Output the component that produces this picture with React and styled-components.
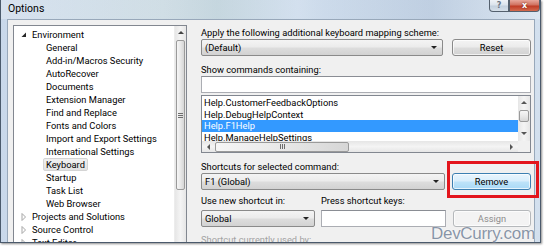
import React from "react";
import styled, { createGlobalStyle } from "styled-components";

const GlobalStyle = createGlobalStyle`
  html, body {
    margin: 0;
    padding: 0;
    background: #ffffff;
  }
  body {
    font-family: Roboto, "Noto Sans", sans-serif;
    font-size: 9.3px;
    color: #000;
  }
`;

const Page = styled.div`
  position: relative;
  width: 544px;
  height: 248px;
  overflow: hidden;
  background: #ffffff;
`;

const Window = styled.div`
  width: 541px;
  height: 243px;
  box-sizing: border-box;
  display: flex;
  flex-direction: column;
  background: linear-gradient(90deg, #c9d8ea 0%, #d6e2ef 30%, #c5d6e9 60%, #d3e0ee 100%);
  border: 1px solid #4b5a6c;
  border-top: none;
  box-shadow: 1px 1px 2px rgba(0, 0, 0, 0.45);
  overflow: hidden;
`;

const TitleBar = styled.div`
  height: 19px;
  flex: none;
  display: flex;
  align-items: flex-start;
  padding-left: 7px;
  background: linear-gradient(90deg, rgba(255,255,255,0.25) 0%, rgba(120,160,120,0.12) 40%, rgba(255,255,255,0.2) 55%, rgba(120,140,170,0.15) 80%, rgba(255,255,255,0.2) 100%);
`;

const Title = styled.span`
  font-size: 10.5px;
  line-height: 18px;
  color: #000;
`;

const CaptionButtons = styled.div`
  margin-left: auto;
  display: flex;
`;

const CaptionButton = styled.div`
  width: ${(p) => p.$w}px;
  height: 12px;
  flex: none;
  box-sizing: border-box;
  display: flex;
  align-items: center;
  justify-content: center;
  border: 1px solid #54606e;
  border-top: none;
  font-family: "DejaVu Sans", sans-serif;
  font-size: 8px;
  font-weight: bold;
  color: ${(p) => (p.$close ? "#ffffff" : "#6c7684")};
  background: ${(p) =>
    p.$close
      ? "linear-gradient(180deg, #e8a89c 0%, #d0715f 45%, #c03c26 55%, #d36a4e 100%)"
      : "linear-gradient(180deg, #eef2f7 0%, #dbe3ec 45%, #c3d0de 55%, #d6e0ea 100%)"};
  border-radius: ${(p) => (p.$close ? "0 0 4px 0" : "0 0 0 4px")};
  text-shadow: ${(p) => (p.$close ? "0 0 2px #5a1a10" : "none")};
`;

const Body = styled.div`
  flex: 1;
  min-height: 0;
  margin: 0 5px 0 6px;
  display: flex;
  gap: 14px;
  padding: 5px 3px 0 5px;
  background: #f0f0f0;
  border: 1px solid #98a8ba;
  border-bottom: none;
`;

const TreePanel = styled.div`
  width: 174px;
  height: 240px;
  flex: none;
  display: flex;
  box-sizing: border-box;
  border: 1px solid #828790;
  border-bottom: none;
  background: #ffffff;
`;

const TreeList = styled.div`
  flex: 1;
  padding-top: 2px;
`;

const TreeRow = styled.div`
  height: 13px;
  display: flex;
  align-items: center;
  padding-left: ${(p) => (p.$child ? 29 : 7)}px;
  white-space: nowrap;
`;

const Expander = styled.span`
  width: 8px;
  flex: none;
  display: flex;
  align-items: center;
`;

const TreeLabel = styled.span`
  padding: 0 2px;
  line-height: 11px;
  border: 1px solid ${(p) => (p.$selected ? "#d4d4d4" : "transparent")};
  border-radius: 2px;
  background: ${(p) => (p.$selected ? "linear-gradient(180deg, #f0f0f0, #e2e2e2)" : "transparent")};
`;

const VScroll = styled.div`
  width: 11px;
  flex: none;
  display: flex;
  flex-direction: column;
  align-items: center;
  background: linear-gradient(90deg, #e6e6e6, #f4f4f4 50%, #e6e6e6);
  border-left: 1px solid #ececec;
`;

const ArrowCell = styled.div`
  height: ${(p) => p.$h || 12}px;
  width: 100%;
  flex: none;
  display: flex;
  align-items: center;
  justify-content: center;
`;

const Thumb = styled.div`
  width: ${(p) => p.$w || 9}px;
  height: ${(p) => p.$h}px;
  flex: none;
  box-sizing: border-box;
  border: 1px solid #9a9a9a;
  border-radius: 2px;
  background: ${(p) =>
    p.$horizontal
      ? "linear-gradient(180deg, #f6f6f6 0%, #e8e8e8 50%, #d6d6d6 100%)"
      : "linear-gradient(90deg, #f6f6f6 0%, #e8e8e8 50%, #d6d6d6 100%)"};
  display: flex;
  align-items: center;
  justify-content: center;
`;

const Grip = styled.div`
  display: flex;
  flex-direction: ${(p) => (p.$horizontal ? "row" : "column")};
  gap: 1px;
  & > span {
    display: block;
    width: ${(p) => (p.$horizontal ? "1px" : "5px")};
    height: ${(p) => (p.$horizontal ? "5px" : "1px")};
    background: #6d6d6d;
  }
`;

const Settings = styled.div`
  flex: 1;
  display: flex;
  flex-direction: column;
  margin-top: 1px;
  & > * {
    flex: none;
  }
`;

const Label = styled.div`
  height: 13px;
  line-height: 13px;
  margin-top: ${(p) => p.$mt || 0}px;
  color: ${(p) => (p.$disabled ? "#a3a3a3" : "#000")};
  white-space: nowrap;
`;

const ControlRow = styled.div`
  display: grid;
  grid-template-columns: 1fr 79px;
  column-gap: ${(p) => p.$gap}px;
  height: 17px;
`;

const Combo = styled.div`
  box-sizing: border-box;
  height: 17px;
  display: flex;
  align-items: center;
  padding: 0 5px 0 3px;
  border: 1px solid #8a8a8a;
  border-radius: 2px;
  background: linear-gradient(180deg, #f4f4f4 0%, #ebebeb 48%, #dddddd 52%, #d2d2d2 100%);
  white-space: nowrap;
`;

const ComboText = styled.span`
  flex: 1;
`;

const Button = styled.div`
  box-sizing: border-box;
  height: 17px;
  display: flex;
  align-items: center;
  justify-content: center;
  border-radius: 3px;
  border: 1px solid ${(p) => (p.$hot ? "#3c7fb1" : p.$disabled ? "#b5b8bb" : "#8a8a8a")};
  color: ${(p) => (p.$disabled ? "#8d8d8d" : "#000")};
  background: ${(p) =>
    p.$hot
      ? "linear-gradient(180deg, #e9f5fd 0%, #d8eefc 48%, #bee3f9 52%, #a9d9f6 100%)"
      : p.$disabled
      ? "#f3f3f3"
      : "linear-gradient(180deg, #f4f4f4 0%, #ebebeb 48%, #dddddd 52%, #d2d2d2 100%)"};
  box-shadow: inset 0 0 0 1px rgba(255, 255, 255, 0.7);
`;

const Highlight = styled.div`
  position: relative;
  display: flex;
  & > div {
    flex: 1;
  }
  &::after {
    content: "";
    position: absolute;
    left: -5px;
    right: -8px;
    top: -12px;
    bottom: -8px;
    border: 3px solid #e3151c;
    pointer-events: none;
  }
`;

const TextBox = styled.div`
  box-sizing: border-box;
  height: 17px;
  border: 1px solid #abadb3;
  border-top-color: #8a8d94;
  background: #ffffff;
`;

const ListBox = styled.div`
  margin-top: 2px;
  height: 58px;
  box-sizing: border-box;
  border: 1px solid #828790;
  background: #ffffff;
  display: grid;
  grid-template-columns: 1fr 12px;
  grid-template-rows: 1fr 11px;
`;

const ListItems = styled.div`
  padding-top: 1px;
  overflow: hidden;
`;

const ListItem = styled.div`
  height: 11.5px;
  line-height: 11.5px;
  padding-left: 2px;
  white-space: nowrap;
  background: ${(p) => (p.$selected ? "#3399ff" : "transparent")};
  color: ${(p) => (p.$selected ? "#ffffff" : "#000")};
`;

const ListVScroll = styled.div`
  display: flex;
  flex-direction: column;
  align-items: center;
  background: linear-gradient(90deg, #e6e6e6, #f4f4f4 50%, #e6e6e6);
`;

const ListHScroll = styled.div`
  display: flex;
  align-items: center;
  background: linear-gradient(180deg, #e6e6e6, #f4f4f4 50%, #e6e6e6);
`;

const HArrowCell = styled.div`
  width: ${(p) => p.$w}px;
  flex: none;
  display: flex;
  justify-content: center;
`;

const Spacer = styled.div`
  flex: 1;
`;

const Corner = styled.div`
  background: #f0f0f0;
`;

const ShortcutGrid = styled.div`
  display: grid;
  grid-template-columns: 114px 125px 79px;
  grid-template-rows: 13px 17px;
  column-gap: 6px;
  row-gap: 3px;
  margin-top: 4px;
  & > :nth-child(3n) {
    margin-left: 1px;
  }
`;

const Watermark = styled.div`
  position: absolute;
  left: 431px;
  top: 226px;
  font-family: "Liberation Sans", Arial, sans-serif;
  font-size: 17px;
  line-height: 16px;
  letter-spacing: -0.3px;
  color: rgba(92, 110, 135, 0.72);
  text-shadow: 0 0 2px rgba(255, 255, 255, 0.9);
  white-space: nowrap;
`;

const Arrow = ({ dir, size = 5, color = "#222" }) => {
  const pts = {
    up: "0,4 3,1 6,4",
    down: "0,1 6,1 3,4",
    left: "4,0 4,6 1,3",
    right: "1,0 1,6 4,3",
  }[dir];
  return (
    <svg width={size + 1} height={size + 1} viewBox="0 0 6 6">
      <polygon points={pts} fill={color} />
    </svg>
  );
};

const Expanded = () => (
  <svg width="6" height="6" viewBox="0 0 6 6">
    <polygon points="5,0.5 5,5 0.5,5" fill="#262626" />
  </svg>
);

const Collapsed = () => (
  <svg width="6" height="8" viewBox="0 0 6 8">
    <polygon points="1,0.5 4.5,4 1,7.5" fill="#ffffff" stroke="#a6a6a6" strokeWidth="1" />
  </svg>
);

const treeItems = [
  { text: "Environment", top: true, open: true },
  { text: "General" },
  { text: "Add-in/Macros Security" },
  { text: "AutoRecover" },
  { text: "Documents" },
  { text: "Extension Manager" },
  { text: "Find and Replace" },
  { text: "Fonts and Colors" },
  { text: "Import and Export Settings" },
  { text: "International Settings" },
  { text: "Keyboard", selected: true },
  { text: "Startup" },
  { text: "Task List" },
  { text: "Web Browser" },
  { text: "Projects and Solutions", top: true },
  { text: "Source Control", top: true },
  { text: "Text Editor", top: true },
];

const commands = [
  "Help.CustomerFeedbackOptions",
  "Help.DebugHelpContext",
  "Help.F1Help",
  "Help.ManageHelpSettings",
];

const App = () => {
  return (
    <Page>
      <GlobalStyle />
      <Window>
        <TitleBar>
          <Title>Options</Title>
          <CaptionButtons>
            <CaptionButton $w={20}>?</CaptionButton>
            <CaptionButton $w={31} $close>x</CaptionButton>
          </CaptionButtons>
        </TitleBar>
        <Body>
          <TreePanel>
            <TreeList>
              {treeItems.map((item) => (
                <TreeRow key={item.text} $child={!item.top}>
                  {item.top && (
                    <Expander>{item.open ? <Expanded /> : <Collapsed />}</Expander>
                  )}
                  <TreeLabel $selected={item.selected}>{item.text}</TreeLabel>
                </TreeRow>
              ))}
            </TreeList>
            <VScroll>
              <ArrowCell $h={14}>
                <Arrow dir="up" color="#444" />
              </ArrowCell>
              <Thumb $h={150}>
                <Grip>
                  <span />
                  <span />
                  <span />
                </Grip>
              </Thumb>
            </VScroll>
          </TreePanel>

          <Settings>
            <Label>Apply the following additional keyboard mapping scheme:</Label>
            <ControlRow $gap={9}>
              <Combo>
                <ComboText>(Default)</ComboText>
                <Arrow dir="down" />
              </Combo>
              <Button>Reset</Button>
            </ControlRow>

            <Label $mt={7}>Show commands containing:</Label>
            <TextBox />

            <ListBox>
              <ListItems>
                {commands.map((c) => (
                  <ListItem key={c} $selected={c === "Help.F1Help"}>
                    {c}
                  </ListItem>
                ))}
              </ListItems>
              <ListVScroll>
                <ArrowCell $h={14}>
                  <Arrow dir="up" color="#555" />
                </ArrowCell>
                <Thumb $w={10} $h={12} $horizontal />
                <Spacer />
                <ArrowCell $h={14}>
                  <Arrow dir="down" color="#555" />
                </ArrowCell>
              </ListVScroll>
              <ListHScroll>
                <HArrowCell $w={13}>
                  <Arrow dir="left" color="#555" />
                </HArrowCell>
                <Thumb $w={134} $h={10}>
                  <Grip $horizontal>
                    <span />
                    <span />
                    <span />
                  </Grip>
                </Thumb>
                <Spacer />
                <HArrowCell $w={13}>
                  <Arrow dir="right" color="#555" />
                </HArrowCell>
              </ListHScroll>
              <Corner />
            </ListBox>

            <Label $mt={7}>Shortcuts for selected command:</Label>
            <ControlRow $gap={7}>
              <Combo>
                <ComboText>F1 (Global)</ComboText>
                <Arrow dir="down" />
              </Combo>
              <Highlight>
                <Button $hot>Remove</Button>
              </Highlight>
            </ControlRow>

            <ShortcutGrid>
              <Label>Use new shortcut in:</Label>
              <Label>Press shortcut keys:</Label>
              <div />
              <Combo>
                <ComboText>Global</ComboText>
                <Arrow dir="down" />
              </Combo>
              <TextBox />
              <Button $disabled>Assign</Button>
            </ShortcutGrid>

            <Label $mt={6} $disabled>Shortcut currently used by:</Label>
          </Settings>
        </Body>
      </Window>
      <Watermark>DevCurry.com</Watermark>
    </Page>
  );
};

export default App;
